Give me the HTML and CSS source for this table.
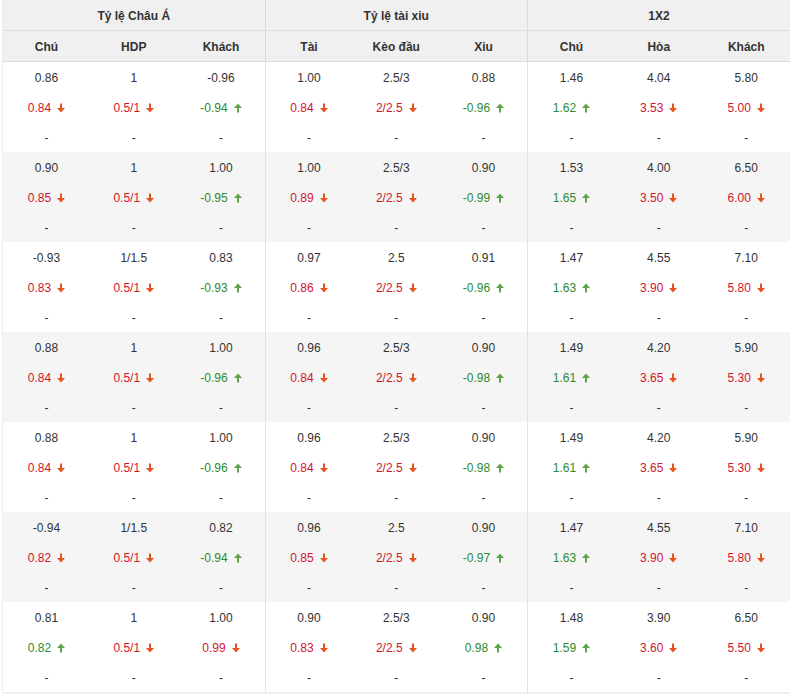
FILE: index.html
```html
<!DOCTYPE html>
<html lang="vi">
<head>
<meta charset="utf-8">
<link rel="stylesheet" href="styles.css">
</head>
<body>
<div class="wrap">
<table class="odds">
<colgroup>
<col class="c"><col class="c"><col class="c g">
<col class="c"><col class="c"><col class="c g">
<col class="c"><col class="c"><col class="c">
</colgroup>
<thead>
<tr class="h1"><th colspan="3" class="gr">Tỷ lệ Châu Á</th><th colspan="3" class="gr">Tỷ lệ tài xiu</th><th colspan="3">1X2</th></tr>
<tr class="h2"><th>Chú</th><th>HDP</th><th class="gr">Khách</th><th>Tài</th><th>Kèo đầu</th><th class="gr">Xiu</th><th>Chú</th><th>Hòa</th><th>Khách</th></tr>
</thead>
<tbody id="body"></tbody>
</table>
</div>
<script src="app.js"></script>
</body>
</html>
```
FILE: app.js
```js
var blocks = [
  [["0.86","1","-0.96","1.00","2.5/3","0.88","1.46","4.04","5.80"],
   ["0.84d","0.5/1d","-0.94u","0.84d","2/2.5d","-0.96u","1.62u","3.53d","5.00d"]],
  [["0.90","1","1.00","1.00","2.5/3","0.90","1.53","4.00","6.50"],
   ["0.85d","0.5/1d","-0.95u","0.89d","2/2.5d","-0.99u","1.65u","3.50d","6.00d"]],
  [["-0.93","1/1.5","0.83","0.97","2.5","0.91","1.47","4.55","7.10"],
   ["0.83d","0.5/1d","-0.93u","0.86d","2/2.5d","-0.96u","1.63u","3.90d","5.80d"]],
  [["0.88","1","1.00","0.96","2.5/3","0.90","1.49","4.20","5.90"],
   ["0.84d","0.5/1d","-0.96u","0.84d","2/2.5d","-0.98u","1.61u","3.65d","5.30d"]],
  [["0.88","1","1.00","0.96","2.5/3","0.90","1.49","4.20","5.90"],
   ["0.84d","0.5/1d","-0.96u","0.84d","2/2.5d","-0.98u","1.61u","3.65d","5.30d"]],
  [["-0.94","1/1.5","0.82","0.96","2.5","0.90","1.47","4.55","7.10"],
   ["0.82d","0.5/1d","-0.94u","0.85d","2/2.5d","-0.97u","1.63u","3.90d","5.80d"]],
  [["0.81","1","1.00","0.90","2.5/3","0.90","1.48","3.90","6.50"],
   ["0.82u","0.5/1d","0.99d","0.83d","2/2.5d","0.98u","1.59u","3.60d","5.50d"]]
];
var DOWN = '<svg class="arr" width="8" height="10" viewBox="0 0 8 10"><rect x="3" y="0.5" width="2" height="5.5" fill="#e5531f"/><polygon points="0,5 8,5 4,9.5" fill="#e5531f"/></svg>';
var UP = '<svg class="arr" width="8" height="10" viewBox="0 0 8 10"><rect x="3" y="4" width="2" height="5.5" fill="#5fa44a"/><polygon points="0,5 8,5 4,0.5" fill="#5fa44a"/></svg>';
var html = "";
blocks.forEach(function (b, i) {
  var cls = i % 2 ? "alt" : "";
  html += '<tr class="' + cls + '">' + b[0].map(function (v, j) {
    return '<td' + (j === 2 || j === 5 ? ' class="gr"' : '') + '>' + v + '</td>';
  }).join("") + '</tr>';
  html += '<tr class="' + cls + '">' + b[1].map(function (v, j) {
    var dir = v.slice(-1), val = v.slice(0, -1);
    var c = (j === 2 || j === 5 ? 'gr ' : '') + (dir === "d" ? "dn" : "up");
    return '<td class="' + c + '">' + val + (dir === "d" ? DOWN : UP) + '</td>';
  }).join("") + '</tr>';
  var dash = "";
  for (var j = 0; j < 9; j++) dash += '<td' + (j === 2 || j === 5 ? ' class="gr"' : '') + '>-</td>';
  html += '<tr class="' + cls + '">' + dash + '</tr>';
});
document.getElementById("body").innerHTML = html;
```
FILE: styles.css
```css
html, body {
  margin: 0;
  padding: 0;
  background: #fff;
}
.wrap {
  padding-left: 2px;
  background: #fff;
}
.odds {
  width: 788px;
  border-collapse: collapse;
  table-layout: fixed;
  font-family: Tahoma, "Liberation Sans", Arial, sans-serif;
  font-size: 12px;
  color: #333;
  border-left: 1px solid #ececec;
  border-bottom: 2px solid #f0f0f0;
}
.odds th {
  background: #f0f0f0;
  font-weight: bold;
  color: #333;
  padding: 1px 0 0;
  text-align: center;
}
.h1 th {
  height: 29px;
  border-bottom: 1px solid #dcdcdc;
}
.h2 th {
  height: 29px;
  border-bottom: 1px solid #dcdcdc;
}
.odds td {
  height: 29px;
  padding: 1px 0 0;
  text-align: center;
  white-space: nowrap;
}
.odds .gr {
  border-right: 1px solid #e2e2e2;
}
.odds thead .gr {
  border-right: 1px solid #dadada;
}
tr.alt td {
  background: #f5f5f5;
}
td.dn {
  color: #d2142d;
}
td.up {
  color: #2e8a2e;
}
.arr {
  margin-left: 6px;
  vertical-align: -1px;
}
```
